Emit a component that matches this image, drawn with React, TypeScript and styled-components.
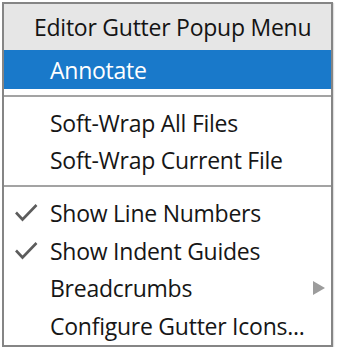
import {createGlobalStyle, styled} from 'styled-components';

const Global = createGlobalStyle`
  html, body {
    margin: 0;
    padding: 0;
    background: #ffffff;
  }
  body {
    font-family: 'Open Sans', 'Noto Sans', sans-serif;
  }
`;

const Menu = styled.div`
  box-sizing: border-box;
  width: 331px;
  margin: 2px 0 0 2px;
  border: 2px solid #858585;
  background: #ffffff;
  display: flex;
  flex-direction: column;
  box-shadow: 1px 1px 1px rgba(0, 0, 0, 0.12);
`;

const Header = styled.div`
  height: 46px;
  display: flex;
  align-items: center;
  padding-left: 30px;
  background: #e6e6e6;
  color: #141414;
  font-size: 23px;
  letter-spacing: -0.25px;
`;

const Item = styled.div<{$active?: boolean; $h?: number}>`
  position: relative;
  height: ${({$h}) => $h ?? 37.6}px;
  display: flex;
  align-items: center;
  padding-left: 46px;
  padding-right: 6px;
  font-size: 23px;
  letter-spacing: -0.25px;
  color: ${({$active}) => ($active ? '#ffffff' : '#161616')};
  background: ${({$active}) => ($active ? '#1979ca' : 'transparent')};
`;

const Label = styled.span`
  flex: 1;
`;

const Separator = styled.div`
  height: 2px;
  background: #a3a3a3;
  margin: 6px 0 7px;
`;

const Check = styled.svg`
  position: absolute;
  left: 10px;
  top: 50%;
  margin-top: -10px;
  width: 24px;
  height: 20px;
`;

const Arrow = styled.span`
  width: 0;
  height: 0;
  border-top: 7px solid transparent;
  border-bottom: 7px solid transparent;
  border-left: 12px solid #9c9c9c;
`;

function CheckMark() {
  return (
    <Check viewBox="0 0 24 20">
      <path d="M2 9.5 L8.5 16.5 L22.5 2" fill="none" stroke="#5c5c5c" strokeWidth="2.6" />
    </Check>
  );
}

export default function App() {
  return (
    <>
      <Global />
      <Menu>
        <Header>Editor Gutter Popup Menu</Header>
        <Item $active $h={39}>
          <Label>Annotate</Label>
        </Item>
        <Separator />
        <Item>
          <Label>Soft-Wrap All Files</Label>
        </Item>
        <Item>
          <Label>Soft-Wrap Current File</Label>
        </Item>
        <Separator />
        <Item>
          <CheckMark />
          <Label>Show Line Numbers</Label>
        </Item>
        <Item>
          <CheckMark />
          <Label>Show Indent Guides</Label>
        </Item>
        <Item>
          <Label>Breadcrumbs</Label>
          <Arrow />
        </Item>
        <Item>
          <Label>Configure Gutter Icons...</Label>
        </Item>
      </Menu>
    </>
  );
}
